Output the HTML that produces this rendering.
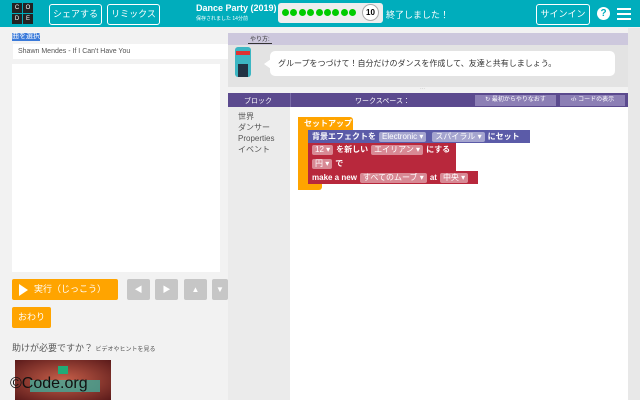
<!DOCTYPE html>
<html><head><meta charset="utf-8"><style>
*{margin:0;padding:0;box-sizing:border-box}
body{width:640px;height:400px;overflow:hidden;background:#f2f2f2;font-family:"Liberation Sans","Noto Sans CJK JP",sans-serif;position:relative}
.a{position:absolute}
.hb{border:1.5px solid #fff;border-radius:3px;color:#fff;font-size:9px;text-align:center;line-height:18px;height:21px}
.blk{position:absolute;color:#fff;font-size:8px;font-weight:bold;line-height:13px;padding-left:4px;white-space:nowrap}
.dd{display:inline-block;background:rgba(255,255,255,.45);border-radius:2px;padding:0 3px;line-height:10px;margin:0 3px;font-weight:normal}
.gb{background:#c6c6c6;border-radius:2px;width:23px;height:21px;color:#fff;font-size:8px;text-align:center;line-height:21px}
.dot{width:7px;height:7px;border-radius:50%;background:#0c0;margin-right:1.4px}
.lg{background:#222;color:#fff;font-size:6px;text-align:center;line-height:10px}
</style></head><body>
<div class="a" style="left:0;top:0;width:640px;height:27px;background:#00adbc"></div>
<div class="a" style="left:12px;top:3px;width:21px;height:21px;display:grid;grid-template-columns:1fr 1fr;gap:1px">
<div class="lg">C</div><div class="lg">O</div><div class="lg">D</div><div class="lg">E</div></div>
<div class="a hb" style="left:49px;top:4px;width:53px">シェアする</div>
<div class="a hb" style="left:107px;top:4px;width:53px">リミックス</div>
<div class="a" style="left:196px;top:3px;color:#fff;font-size:9px;font-weight:bold">Dance Party (2019)</div>
<div class="a" style="left:196px;top:15px;color:#fff;font-size:5px">保存されました 14分前</div>
<div class="a" style="left:278px;top:3px;width:105px;height:20px;background:#eee;border-radius:3px"></div>
<div class="a" style="left:282px;top:9px;display:flex"><div class="dot"></div><div class="dot"></div><div class="dot"></div><div class="dot"></div><div class="dot"></div><div class="dot"></div><div class="dot"></div><div class="dot"></div><div class="dot"></div></div>
<div class="a" style="left:362px;top:4px;width:17px;height:17px;border-radius:50%;background:#fff;border:1px solid #aaa;font-size:8px;font-weight:bold;text-align:center;line-height:15px">10</div>
<div class="a" style="left:386px;top:8px;color:#fff;font-size:9px">終了しました！</div>
<div class="a hb" style="left:536px;top:4px;width:54px">サインイン</div>
<div class="a" style="left:597px;top:7px;width:13px;height:13px;border-radius:50%;background:#fff;color:#00adbc;font-size:10px;font-weight:bold;text-align:center;line-height:13px">?</div>
<div class="a" style="left:617px;top:8px;width:14px;height:2px;background:#fff;box-shadow:0 5px #fff,0 10px #fff"></div>

<div class="a" style="left:12px;top:33px;background:#3b7ad9;color:#fff;font-size:7px;line-height:8px">曲を選択</div>
<div class="a" style="left:13px;top:44px;width:215px;height:15px;background:#fff;font-size:7px;color:#555;padding-left:5px;line-height:15px">Shawn Mendes - If I Can't Have You</div>
<div class="a" style="left:12px;top:64px;width:208px;height:208px;background:#fff"></div>
<div class="a" style="left:12px;top:279px;width:106px;height:21px;background:#ffa400;border-radius:2px;color:#fff;font-size:9px;line-height:21px;padding-left:22px">実行（じっこう）</div>
<div class="a" style="left:19px;top:284px;width:0;height:0;border-left:9px solid #fff;border-top:6px solid transparent;border-bottom:6px solid transparent"></div>
<div class="a gb" style="left:127px;top:279px">◀</div>
<div class="a gb" style="left:155px;top:279px">▶</div>
<div class="a gb" style="left:184px;top:279px">▲</div>
<div class="a gb" style="left:212px;top:279px;width:16px">▼</div>
<div class="a" style="left:12px;top:307px;width:39px;height:21px;background:#ffa400;border-radius:2px;color:#fff;font-size:9px;line-height:21px;text-align:center">おわり</div>
<div class="a" style="left:12px;top:341px;font-size:9px;color:#555">助けが必要ですか？ <span style="font-size:6px">ビデオやヒントを見る</span></div>
<div class="a" style="left:15px;top:360px;width:96px;height:40px;background:radial-gradient(#c8604a,#5a1a1a)"></div>
<div class="a" style="left:58px;top:366px;width:10px;height:8px;background:#2a7"></div>
<div class="a" style="left:30px;top:380px;width:70px;height:12px;background:#4a9;opacity:.8"></div>
<div class="a" style="left:10px;top:375px;font-size:16px;color:#111">©Code.org</div>

<div class="a" style="left:628px;top:28px;width:12px;height:372px;background:#e8e8e8"></div>
<div class="a" style="left:228px;top:33px;width:400px;height:12px;background:#cdc8dd"></div>
<div class="a" style="left:248px;top:34px;font-size:6px;color:#333;border-bottom:1px solid #333;padding:0 2px">やり方:</div>
<div class="a" style="left:228px;top:45px;width:400px;height:42px;background:#e3e3e3"></div>
<div class="a" style="left:235px;top:47px;width:16px;height:30px;background:#3cb6c3;border-radius:3px"></div>
<div class="a" style="left:236px;top:51px;width:14px;height:4px;background:#d33"></div>
<div class="a" style="left:238px;top:64px;width:10px;height:13px;background:#234"></div>
<div class="a" style="left:270px;top:51px;width:345px;height:25px;background:#fff;border-radius:5px;font-size:8px;color:#333;line-height:25px;padding-left:8px">グループをつづけて！自分だけのダンスを作成して、友達と共有しましょう。</div>
<div class="a" style="left:264px;top:59px;width:0;height:0;border-right:7px solid #fff;border-top:5px solid transparent;border-bottom:5px solid transparent"></div>

<div class="a" style="left:228px;top:93px;width:400px;height:14px;background:#5b4a8e"></div>
<div class="a" style="left:244px;top:96px;color:#fff;font-size:7px">ブロック</div>
<div class="a" style="left:290px;top:93px;width:1px;height:14px;background:#7a6ca8"></div>
<div class="a" style="left:355px;top:96px;color:#fff;font-size:7px">ワークスペース：</div>
<div class="a" style="left:475px;top:95px;width:81px;height:11px;background:#8c7fb5;color:#fff;font-size:6px;line-height:11px;text-align:center">↻ 最初からやりなおす</div>
<div class="a" style="left:560px;top:95px;width:65px;height:11px;background:#8c7fb5;color:#fff;font-size:6px;line-height:11px;text-align:center">‹/› コードの表示</div>
<div class="a" style="left:228px;top:107px;width:62px;height:293px;background:#ebebeb"></div>
<div class="a" style="left:290px;top:107px;width:338px;height:293px;background:#fff"></div>
<div class="a" style="left:238px;top:111px;font-size:8px;color:#555;line-height:11px">世界<br>ダンサー<br>Properties<br>イベント</div>

<div class="a" style="left:298px;top:117px;width:55px;height:13px;background:#ffa400;border-radius:3px 3px 0 0"></div>
<div class="a" style="left:298px;top:117px;width:10px;height:73px;background:#ffa400"></div>
<div class="a" style="left:298px;top:184px;width:24px;height:6px;background:#ffa400;border-radius:0 0 3px 3px"></div>
<div class="blk" style="left:300px;top:117px">セットアップ</div>
<div class="blk" style="left:308px;top:130px;width:222px;background:#5b5ba8">背景エフェクトを<span class="dd">Electronic ▾</span><span class="dd">スパイラル ▾</span>にセット</div>
<div class="blk" style="left:308px;top:143px;width:148px;height:28px;background:#b8283c;line-height:14px"><span class="dd" style="margin-left:0">12 ▾</span>を新しい<span class="dd">エイリアン ▾</span>にする<br><span class="dd" style="margin-left:0">円 ▾</span>で</div>
<div class="blk" style="left:308px;top:171px;width:170px;background:#b8283c">make a new<span class="dd">すべてのムーブ ▾</span>at<span class="dd">中央 ▾</span></div>
<div class="a" style="left:420px;top:86px;font-size:5px;color:#aaa">···</div>
</body></html>
